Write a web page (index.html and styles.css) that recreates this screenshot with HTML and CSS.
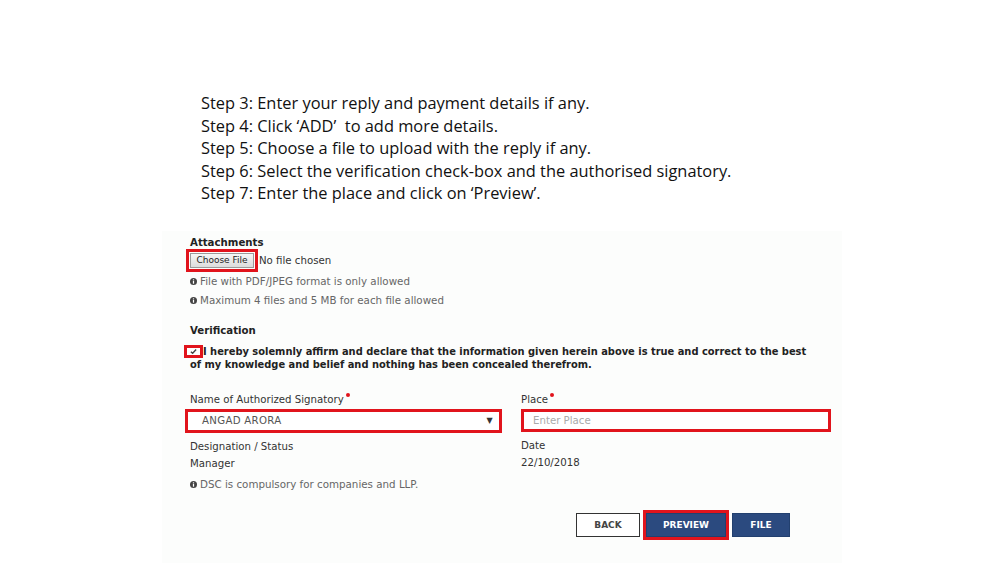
FILE: index.html
```html
<!DOCTYPE html>
<html>
<head>
<meta charset="utf-8">
<link rel="stylesheet" href="styles.css">
</head>
<body>
<div class="steps">
  <p>Step 3: Enter your reply and payment details if any.</p>
  <p>Step 4: Click ‘ADD’&nbsp; to add more details.</p>
  <p>Step 5: Choose a file to upload with the reply if any.</p>
  <p>Step 6: Select the verification check-box and the authorised signatory.</p>
  <p>Step 7: Enter the place and click on ‘Preview’.</p>
</div>
<div class="panel">
  <div class="section-title">Attachments</div>
  <div class="file-row">
    <span class="file-btn">Choose File</span>
    <span class="nofile">No file chosen</span>
  </div>
  <div class="hint"><svg class="info" viewBox="0 0 8 8"><circle cx="4" cy="4" r="4" fill="#444"/><rect x="3.3" y="3.3" width="1.4" height="3.2" fill="#fff"/><rect x="3.3" y="1.5" width="1.4" height="1.2" fill="#fff"/></svg>File with PDF/JPEG format is only allowed</div>
  <div class="hint"><svg class="info" viewBox="0 0 8 8"><circle cx="4" cy="4" r="4" fill="#444"/><rect x="3.3" y="3.3" width="1.4" height="3.2" fill="#fff"/><rect x="3.3" y="1.5" width="1.4" height="1.2" fill="#fff"/></svg>Maximum 4 files and 5 MB for each file allowed</div>

  <div class="section-title verif">Verification</div>
  <p class="declare"><span class="check"><svg viewBox="0 0 10 8"><path d="M2 4.2 L4 6 L8 1.8" fill="none" stroke="#444" stroke-width="1.6"/></svg></span>I hereby solemnly affirm and declare that the information given herein above is true and correct to the best of my knowledge and belief and nothing has been concealed therefrom.</p>

  <div class="grid">
    <div class="col">
      <div class="label">Name of Authorized Signatory<span class="req"></span></div>
      <div class="select"><span>ANGAD ARORA</span><span class="arrow">▼</span></div>
      <div class="label sub">Designation / Status</div>
      <div class="value">Manager</div>
    </div>
    <div class="col">
      <div class="label">Place<span class="req"></span></div>
      <div class="input">Enter Place</div>
      <div class="label sub">Date</div>
      <div class="value">22/10/2018</div>
    </div>
  </div>
  <div class="hint dsc"><svg class="info" viewBox="0 0 8 8"><circle cx="4" cy="4" r="4" fill="#444"/><rect x="3.3" y="3.3" width="1.4" height="3.2" fill="#fff"/><rect x="3.3" y="1.5" width="1.4" height="1.2" fill="#fff"/></svg>DSC is compulsory for companies and LLP.</div>

  <div class="actions">
    <span class="btn back">BACK</span>
    <span class="btn primary hl">PREVIEW</span>
    <span class="btn primary">FILE</span>
  </div>
</div>
</body>
</html>
```
FILE: styles.css
```css
html, body {
  margin: 0;
  padding: 0;
  background: #ffffff;
}
body {
  width: 1000px;
  height: 563px;
  overflow: hidden;
}
.steps {
  padding: 92px 0 0 201px;
  font-family: "Open Sans", Lato, sans-serif;
  font-size: 16.4px;
  color: #111;
}
.steps p {
  margin: 0;
  line-height: 22.5px;
  height: 22.5px;
}
.panel {
  margin: 26px 0 0 162px;
  width: 680px;
  height: 332px;
  box-sizing: border-box;
  padding: 6px 11px 0 28px;
  background: #fcfdfc;
  font-family: "DejaVu Sans", Verdana, sans-serif;
  font-size: 10.2px;
  color: #333;
}
.section-title {
  font-weight: bold;
  line-height: 12px;
  color: #222;
}
.file-row {
  display: flex;
  align-items: center;
  height: 23px;
}
.file-btn {
  display: inline-block;
  box-sizing: border-box;
  width: 64px;
  height: 15px;
  line-height: 13px;
  text-align: center;
  font-size: 9px;
  color: #222;
  background: linear-gradient(#f6f6f6, #dcdcdc);
  border: 1px solid #9a9a9a;
  outline: 3px solid #e1141c;
  outline-offset: 1px;
}
.nofile {
  margin-left: 5px;
  color: #333;
}
.hint {
  display: flex;
  align-items: center;
  line-height: 19px;
  color: #666;
  font-size: 10.3px;
}
.info {
  width: 7px;
  height: 7px;
  margin-right: 3px;
  flex: none;
}
.verif {
  margin-top: 15px;
}
.declare {
  margin: 8px 0 0 0;
  width: 625px;
  font-weight: bold;
  font-size: 9.9px;
  line-height: 13px;
  color: #222;
}
.check {
  display: inline-block;
  box-sizing: border-box;
  width: 19px;
  height: 13px;
  border: 3px solid #e1141c;
  margin-left: -6px;
  vertical-align: -3px;
  background: #fff;
}
.check svg {
  display: block;
  width: 9px;
  height: 7px;
  margin: 0 auto;
}
.grid {
  display: grid;
  grid-template-columns: 331px 310px;
  margin-top: 22px;
}
.label {
  line-height: 12px;
  color: #333;
}
.req {
  display: inline-block;
  width: 4px;
  height: 4px;
  border-radius: 50%;
  background: #e1141c;
  margin-left: 2px;
  vertical-align: 6px;
}
.select {
  display: flex;
  justify-content: space-between;
  align-items: center;
  box-sizing: border-box;
  width: 317px;
  height: 24px;
  margin: 3px 0 0 -5px;
  padding: 0 6px 0 14px;
  border: 3px solid #e1141c;
  background: #fff;
  color: #555;
  letter-spacing: 0.3px;
}
.arrow {
  font-size: 8px;
  color: #333;
}
.input {
  box-sizing: border-box;
  width: 310px;
  height: 23px;
  margin-top: 3px;
  padding-left: 9px;
  line-height: 17px;
  border: 3px solid #e1141c;
  background: #fff;
  color: #aaa;
}
.sub {
  margin-top: 8px;
}
.value {
  line-height: 12px;
  margin-top: 5px;
  color: #333;
}
.dsc {
  margin-top: 5px;
}
.actions {
  display: flex;
  justify-content: flex-end;
  gap: 6px;
  margin: 19px 41px 0 0;
}
.btn {
  display: inline-block;
  box-sizing: border-box;
  height: 24px;
  line-height: 22px;
  text-align: center;
  font-size: 9px;
  font-weight: bold;
}
.back {
  width: 64px;
  background: #fff;
  border: 1px solid #333;
  color: #444;
}
.primary {
  width: 58px;
  background: #2b4a7f;
  border: 1px solid #22406f;
  color: #fff;
}
.primary.hl {
  width: 80px;
  outline: 3px solid #e1141c;
  outline-offset: 0;
}
```
